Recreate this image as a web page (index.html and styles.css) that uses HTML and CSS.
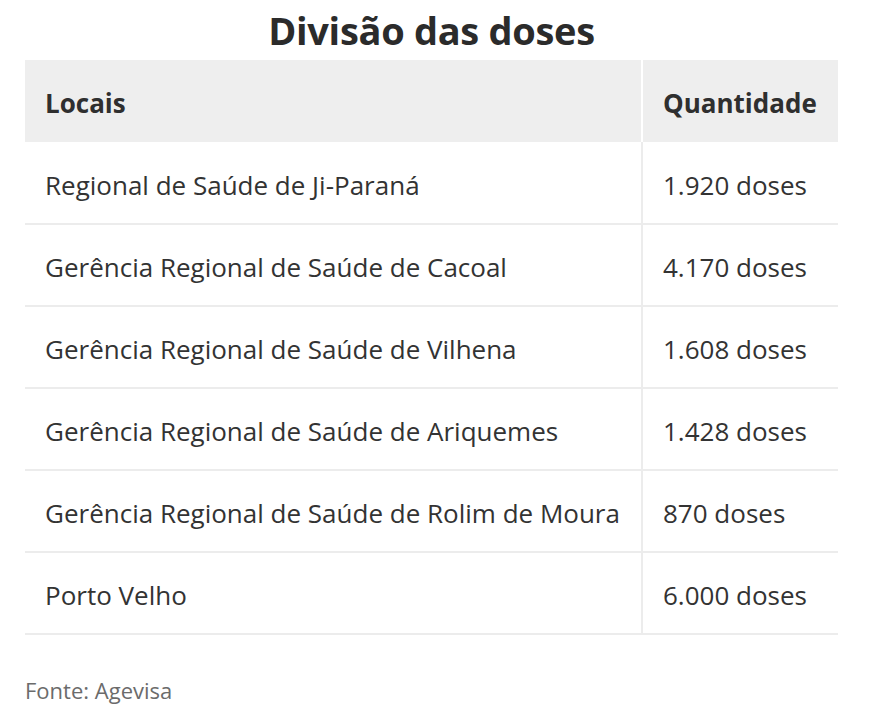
FILE: index.html
```html
<!DOCTYPE html>
<html lang="pt">
<head>
<meta charset="utf-8">
<link rel="stylesheet" href="styles.css">
</head>
<body>
<div class="wrap">
  <h1 class="title">Divisão das doses</h1>
  <table class="doses">
    <thead>
      <tr><th class="c1">Locais</th><th class="c2">Quantidade</th></tr>
    </thead>
    <tbody>
      <tr><td class="c1">Regional de Saúde de Ji-Paraná</td><td class="c2">1.920 doses</td></tr>
      <tr><td class="c1">Gerência Regional de Saúde de Cacoal</td><td class="c2">4.170 doses</td></tr>
      <tr><td class="c1">Gerência Regional de Saúde de Vilhena</td><td class="c2">1.608 doses</td></tr>
      <tr><td class="c1">Gerência Regional de Saúde de Ariquemes</td><td class="c2">1.428 doses</td></tr>
      <tr><td class="c1">Gerência Regional de Saúde de Rolim de Moura</td><td class="c2">870 doses</td></tr>
      <tr><td class="c1">Porto Velho</td><td class="c2">6.000 doses</td></tr>
    </tbody>
  </table>
  <p class="source">Fonte: Agevisa</p>
</div>
</body>
</html>
```
FILE: styles.css
```css
html, body {
  margin: 0;
  padding: 0;
  background: #fff;
}
body {
  font-family: "Open Sans", "Noto Sans", sans-serif;
  color: #333;
}
.wrap {
  width: 813px;
  margin-left: 25px;
}
.title {
  margin: 0;
  height: 60px;
  font-size: 38px;
  line-height: 60px;
  font-weight: 700;
  color: #2b2b2b;
  text-align: center;
  letter-spacing: -0.3px;
}
.doses {
  width: 813px;
  border-collapse: collapse;
  table-layout: fixed;
}
.doses .c1 { width: 617px; }
.doses .c2 { width: 196px; }
.doses th, .doses td {
  height: 82px;
  box-sizing: border-box;
  padding: 4px 0 0 20px;
  text-align: left;
  font-size: 26px;
  white-space: nowrap;
}
.doses th {
  background: #eeeeee;
  font-weight: 700;
  color: #2f2f2f;
}
.doses th.c1 {
  border-right: 2px solid #fff;
}
.doses td {
  font-weight: 400;
  color: #333;
  border-bottom: 2px solid #ececec;
}
.doses td.c1 {
  border-right: 2px solid #ececec;
}
.source {
  margin: 40px 0 0 0;
  font-size: 22px;
  color: #6b6b6b;
  letter-spacing: 0;
}
```
